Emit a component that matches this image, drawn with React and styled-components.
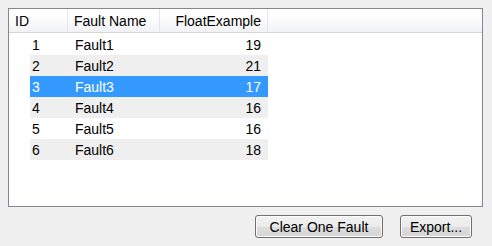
import React from "react";
import styled, { createGlobalStyle } from "styled-components";

const faults = [
  { id: 1, name: "Fault1", value: 19 },
  { id: 2, name: "Fault2", value: 21 },
  { id: 3, name: "Fault3", value: 17, selected: true },
  { id: 4, name: "Fault4", value: 16 },
  { id: 5, name: "Fault5", value: 16 },
  { id: 6, name: "Fault6", value: 18 },
];

const App = () => {
  return (
    <Window>
      <GlobalStyle />
      <ListBox>
        <Header>
          <HeaderCell $width={59}>ID</HeaderCell>
          <HeaderCell $width={92}>Fault Name</HeaderCell>
          <HeaderCell $width={108} $right>
            FloatExample
          </HeaderCell>
          <HeaderFiller />
        </Header>
        <Rows>
          {faults.map((f, i) => (
            <Row key={f.id} $alt={i % 2 === 1} $selected={f.selected}>
              <IdCell>{f.id}</IdCell>
              <NameCell>{f.name}</NameCell>
              <ValueCell>{f.value}</ValueCell>
            </Row>
          ))}
        </Rows>
      </ListBox>
      <ButtonBar>
        <Button $width={128}>Clear One Fault</Button>
        <Button $width={72}>Export...</Button>
      </ButtonBar>
    </Window>
  );
};

const GlobalStyle = createGlobalStyle`
  body {
    margin: 0;
    background: #f0f0f0;
    font-family: "Liberation Sans", Arial, sans-serif;
  }
`;

const Window = styled.div`
  width: 492px;
  height: 246px;
  padding: 8px 0 0 8px;
  box-sizing: border-box;
  display: flex;
  flex-direction: column;
`;

const ListBox = styled.div`
  width: 475px;
  height: 199px;
  box-sizing: border-box;
  border: 1px solid #828790;
  background: #ffffff;
`;

const Header = styled.div`
  display: flex;
  height: 24px;
  box-sizing: border-box;
  border-bottom: 1px solid #d5d5d5;
  background: linear-gradient(#ffffff 0%, #fdfdfd 40%, #f1f2f4 100%);
`;

const HeaderCell = styled.div`
  width: ${(p) => p.$width}px;
  box-sizing: border-box;
  padding: 0 6px;
  border-right: 1px solid #e3e5e8;
  display: flex;
  align-items: center;
  justify-content: ${(p) => (p.$right ? "flex-end" : "flex-start")};
  font-size: 14px;
  color: #000;
  white-space: nowrap;
`;

const HeaderFiller = styled.div`
  flex: 1;
`;

const Rows = styled.div`
  display: flex;
  flex-direction: column;
  padding: 1px 0 0 21px;
`;

const Row = styled.div`
  display: grid;
  grid-template-columns: 38px 92px 108px;
  width: 238px;
  height: 21px;
  align-items: center;
  font-size: 14px;
  background: ${(p) => (p.$selected ? "#3399ff" : p.$alt ? "#efefef" : "#ffffff")};
  color: ${(p) => (p.$selected ? "#ffffff" : "#000000")};
`;

const IdCell = styled.span`
  padding-left: 2px;
`;

const NameCell = styled.span`
  padding-left: 7px;
`;

const ValueCell = styled.span`
  text-align: right;
  padding-right: 7px;
`;

const ButtonBar = styled.div`
  display: flex;
  justify-content: flex-end;
  gap: 17px;
  padding: 8px 20px 0 0;
`;

const Button = styled.button`
  width: ${(p) => p.$width}px;
  height: 23px;
  box-sizing: border-box;
  border: 1px solid #707070;
  border-radius: 3px;
  background: linear-gradient(#f2f2f2 0%, #ebebeb 50%, #dddddd 51%, #d6d6d6 100%);
  font-family: "Liberation Sans", Arial, sans-serif;
  font-size: 14px;
  color: #000;
  padding: 1px 0 0;
  box-shadow: inset 0 0 0 1px #fcfcfc;
`;

export default App;
